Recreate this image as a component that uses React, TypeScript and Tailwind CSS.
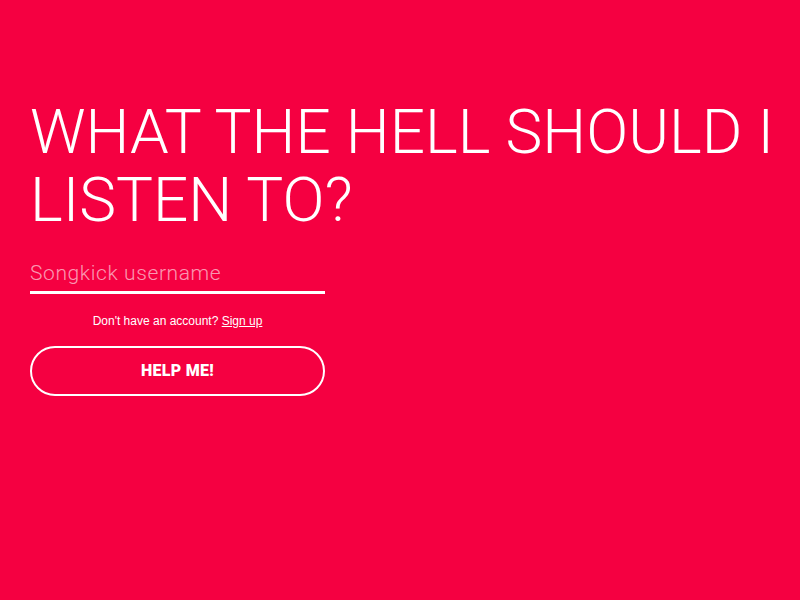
import React from "react";

export default function App() {
  return (
    <div className="min-h-[600px] w-full bg-[#f50041] text-white" style={{ fontFamily: "Roboto, 'Liberation Sans', sans-serif" }}>
      <div className="px-[30px] pt-[98px]">
        <h1 className="text-[62px] font-light leading-[68px] uppercase whitespace-nowrap">
          What the hell should I<br />listen to?
        </h1>
        <div className="mt-[26px] w-[295px]">
          <input
            type="text"
            placeholder="Songkick username"
            className="w-full h-[34px] bg-transparent border-0 border-b-[3px] border-white text-[21px] font-light tracking-[0.6px] text-white placeholder:text-white/60 outline-none pb-[5px]"
          />
          <p className="mt-[19px] text-center text-[12px] leading-[16px] font-['Liberation_Sans',sans-serif]">
            Don't have an account? <a href="#" className="underline">Sign up</a>
          </p>
          <button className="mt-[17px] w-full h-[50px] rounded-full border-2 border-white text-[16px] font-black tracking-[0.3px]">
            HELP ME!
          </button>
        </div>
      </div>
    </div>
  );
}
